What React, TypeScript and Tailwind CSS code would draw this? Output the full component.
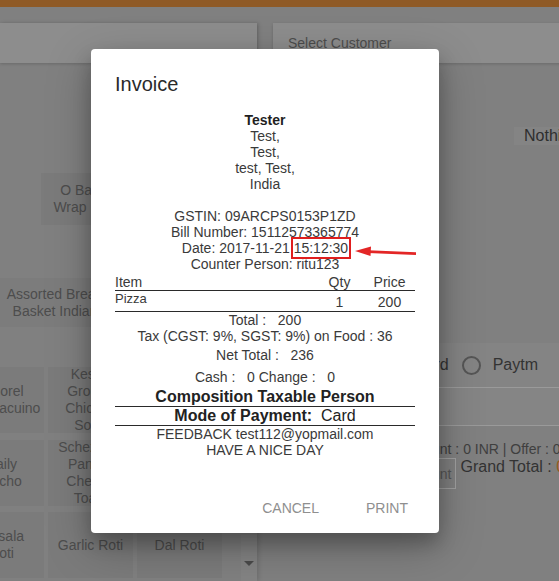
const menuRows = [
  [["Amorel", "Frappacuino"], ["Kesari", "Ground", "Chicken", "Soup"], ["Veg", "Manchow", "Soup"]],
  [["Daily", "Nacho"], ["Schezwan", "Paneer", "Cheese", "Toast"], ["Cheese", "Garlic", "Toast"]],
  [["Masala", "Roti"], ["Garlic Roti"], ["Dal Roti"]],
];

const Receipt = () => {
  return (
    <div className="mt-4 w-[300px] text-center text-[14px] leading-4 text-[#3a3a3a]">
      <div className="font-bold text-[#1f1f1f]">Tester</div>
      <div>Test,</div>
      <div>Test,</div>
      <div>test, Test,</div>
      <div>India</div>
      <div className="h-4" />
      <div>GSTIN: 09ARCPS0153P1ZD</div>
      <div>Bill Number: 15112573365774</div>
      <div className="relative">
        Date: 2017-11-21{" "}
        <span className="outline-2 outline-offset-[1px] outline-[#e01e1e]">15:12:30</span>
        <svg
          className="absolute left-[239px] top-[5px]"
          width="64"
          height="13"
          viewBox="0 0 64 13"
        >
          <line x1="14" y1="6.6" x2="62" y2="8.6" stroke="#e32626" strokeWidth="2.6" />
          <polygon points="1,6 17,1.5 16.5,11" fill="#e32626" />
        </svg>
      </div>
      <div>Counter Person: ritu123</div>

      <div className="flex pt-[2px] border-b border-[#2a2a2a] text-left">
        <div className="flex-1">Item</div>
        <div className="w-[49px] text-center">Qty</div>
        <div className="w-[51px] text-center">Price</div>
      </div>
      <div className="flex h-[21px] border-b border-[#2a2a2a] text-left">
        <div className="flex-1 text-[13px]">Pizza</div>
        <div className="w-[49px] pt-[3px] text-center">1</div>
        <div className="w-[51px] pt-[3px] text-center">200</div>
      </div>

      <div className="whitespace-pre">Total :   200</div>
      <div>Tax (CGST: 9%, SGST: 9%) on Food : 36</div>
      <div className="mt-[3px] whitespace-pre">Net Total :   236</div>
      <div className="mt-[6px] whitespace-pre">Cash :   0 Change :   0</div>
      <div className="mt-[3px] text-[16px] leading-[18px] font-bold text-[#222] border-b border-[#2a2a2a]">
        Composition Taxable Person
      </div>
      <div className="text-[16px] leading-[18px] text-[#222] border-b border-[#2a2a2a] whitespace-pre">
        <span className="font-bold">Mode of Payment:</span>  Card
      </div>
      <div>FEEDBACK test112@yopmail.com</div>
      <div>HAVE A NICE DAY</div>
    </div>
  );
};

export default function App() {
  return (
    <div className="relative w-[559px] h-[581px] overflow-hidden bg-[#808080] font-['Liberation_Sans',Arial,sans-serif] text-[14px]">
      <div className="h-[7px] bg-[#8f5a26]" />

      <div className="flex gap-4 pt-4">
        {/* menu panel */}
        <div className="w-[257px] shrink-0 h-[558px] shadow-[2px_0_4px_rgba(0,0,0,0.12)]">
          <div className="h-10 bg-[#8d8d8d] shadow-[0_1px_3px_rgba(0,0,0,0.18)]" />
          <div className="pt-[110px] text-[#4d4d4d] leading-[17px]">
            <div className="ml-[41px] w-[86px] h-[52px] bg-[#7b7b7b] flex flex-col items-center justify-center">
              <span>O Bang</span>
              <span>Wrap Roll</span>
            </div>
            <div className="mt-[53px] w-[110px] h-[49px] bg-[#7c7c7c] flex flex-col items-center justify-center">
              <span className="whitespace-nowrap">Assorted Bread</span>
              <span className="whitespace-nowrap">Basket Indian</span>
            </div>
            <div className="mt-[40px] flex">
              <div className="-ml-[41px] grid grid-cols-[85px_85px_85px] gap-[4px] shrink-0">
                {menuRows.flat().map((lines, i) => (
                  <div
                    key={i}
                    className="h-[66px] bg-[#7b7b7b] flex flex-col items-center justify-center"
                  >
                    {lines.map((l) => (
                      <span key={l} className="whitespace-nowrap">
                        {l}
                      </span>
                    ))}
                  </div>
                ))}
              </div>
              <div className="ml-[19px] mt-[168px] w-[17px] h-[46px] bg-[#848484] flex justify-center pt-[26px]">
                <span className="w-0 h-0 border-x-[5px] border-x-transparent border-t-[5px] border-t-[#4a4a4a]" />
              </div>
            </div>
          </div>
        </div>

        {/* order panel */}
        <div className="flex-1 h-[558px]">
          <div className="h-10 bg-[#8d8d8d] shadow-[0_1px_3px_rgba(0,0,0,0.18)] flex items-center pl-[15px] text-[#4d4d4d]">
            Select Customer
          </div>
          <div className="mt-[64px] ml-[241px] h-[18px] bg-[#848484] pl-[10px] text-[16px] leading-[18px] text-[#2e2e2e] whitespace-nowrap">
            Nothing
          </div>
          <div className="mt-[198px] h-[45px] bg-[#848484] border-b border-[#9a9a9a] flex items-center pl-[141px] text-[16px] text-[#333]">
            <span>Card</span>
            <span className="ml-[13px] w-[19px] h-[19px] rounded-full border-2 border-[#555]" />
            <span className="ml-[12px]">Paytm</span>
          </div>
          <div className="h-[38px] bg-[#858585] border-b border-[#9a9a9a]" />
          <div className="mt-[15px] ml-[124px] text-[14px] leading-4 text-[#3f3f3f] whitespace-nowrap">
            Discount : 0 INR | Offer : 0
          </div>
          <div className="mt-[1px] ml-[119px] flex items-start">
            <div className="h-[31px] px-1 border border-[#a0a0a0] flex items-end pb-[3px] text-[#555] whitespace-nowrap">
              Discount
            </div>
            <div className="ml-1 text-[16px] leading-[18px] text-[#333] whitespace-nowrap">
              Grand Total : <span className="text-[#9a5a1e]">0</span>
            </div>
          </div>
        </div>
      </div>

      {/* invoice dialog */}
      <div className="absolute left-[91px] top-[49px] w-[348px] h-[484px] bg-white rounded-[4px] shadow-[0_14px_45px_rgba(0,0,0,0.25),0_10px_18px_rgba(0,0,0,0.22)] flex flex-col">
        <div className="px-6 pt-[23px]">
          <h3 className="text-[20px] leading-6 text-[#2a2a2a]">Invoice</h3>
          <Receipt />
        </div>
        <div className="mt-auto flex justify-end gap-2 pr-2 pb-[7px]">
          <button className="h-9 min-w-[88px] px-4 text-[14px] text-[#8f8f8f] uppercase">
            Cancel
          </button>
          <button className="h-9 min-w-[88px] px-4 text-[14px] text-[#8f8f8f] uppercase">
            Print
          </button>
        </div>
      </div>
    </div>
  );
}
